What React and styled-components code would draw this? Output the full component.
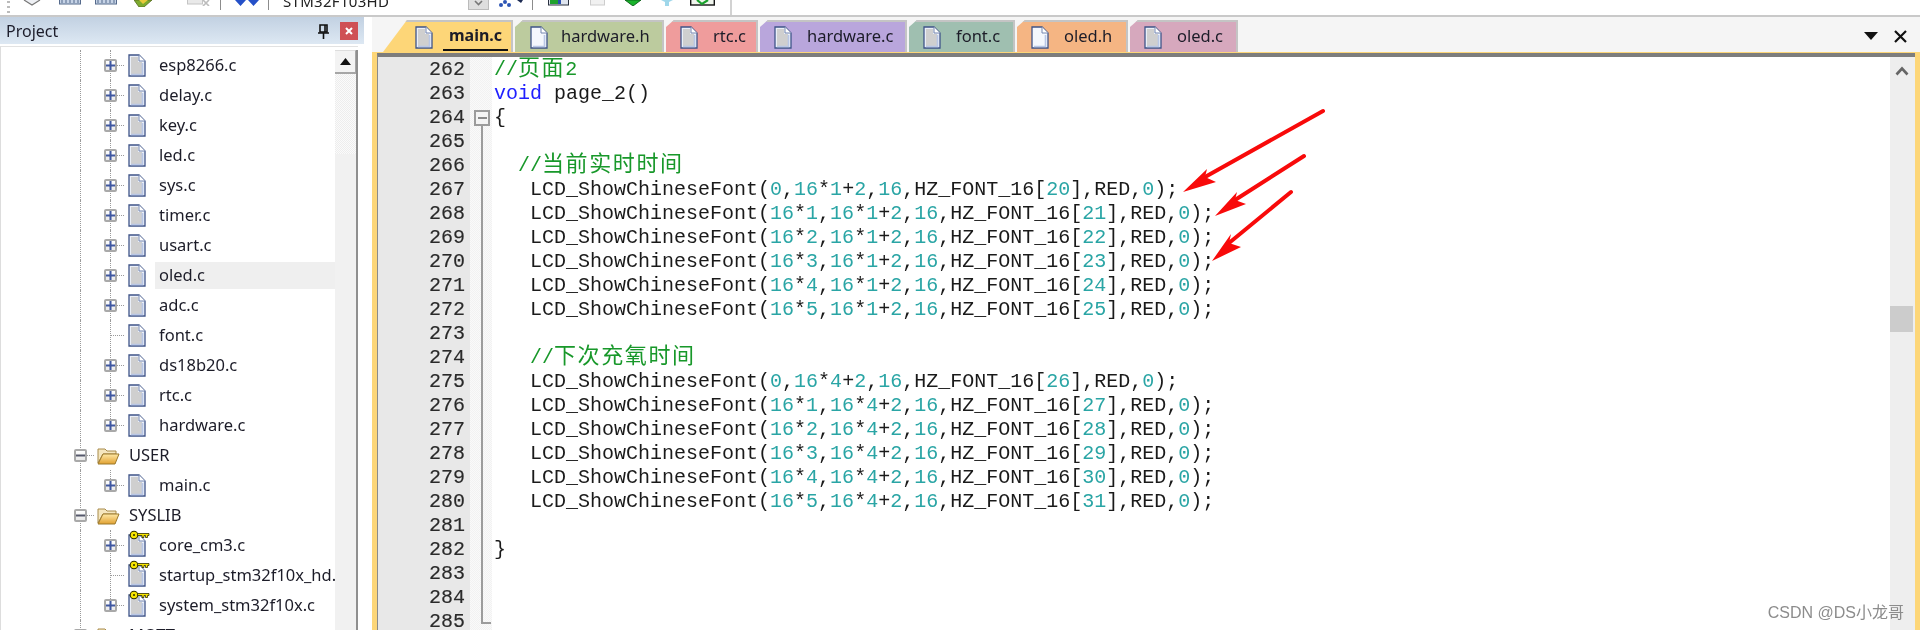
import React from "react";
import styled, { createGlobalStyle } from "styled-components";

const Global = createGlobalStyle`
  html, body { margin: 0; width: 1920px; height: 630px; overflow: hidden; background: #fff; }
  #root { width: 1920px; height: 630px; }
`;

const Page = styled.div`
  position: relative;
  width: 1920px;
  height: 630px;
  overflow: hidden;
  display: flex;
  flex-direction: column;
  background: #fff;
  font-family: "Noto Sans", sans-serif;
  filter: blur(0.5px);
`;

/* toolbar */
const Toolbar = styled.div`
  height: 15px;
  flex: none;
  border-bottom: 2px solid #c9c9c9;
  overflow: hidden;
  display: flex;
`;
const ToolGroup = styled.div`
  width: 730px;
  height: 15px;
  border-right: 2px solid #d2d2d2;
  display: flex;
  align-items: flex-start;
`;
const Tool = styled.svg`
  flex: none;
  display: block;
  margin-left: ${(p) => p.$left}px;
`;
const Sep = styled.span`
  flex: none;
  width: 1px;
  height: 10px;
  background: #8c8c8c;
  margin-left: ${(p) => p.$left}px;
`;
const Grip = styled.span`
  flex: none;
  width: 3px;
  height: 12px;
  margin: 1px 0 0 7px;
  background: repeating-linear-gradient(#bbb 0 2px, transparent 2px 5px);
`;
const Target = styled.span`
  flex: none;
  width: 185px;
  margin: -7px 0 0 14px;
  font-size: 15px;
  line-height: 16px;
  color: #222;
  letter-spacing: 0.3px;
`;
const Combo = styled.span`
  flex: none;
  width: 19px;
  height: 9px;
  background: #dedede;
  border: 1px solid #bbb;
  border-top: 0;
  display: flex;
  justify-content: center;
`;

/* main */
const Main = styled.div`
  flex: 1;
  min-height: 0;
  display: flex;
`;
const Sidebar = styled.aside`
  flex: none;
  width: 364px;
  margin-right: 8px;
  display: flex;
  flex-direction: column;
`;
const PanelHeader = styled.header`
  flex: none;
  height: 27px;
  padding: 1px 6px 0;
  box-sizing: border-box;
  display: flex;
  align-items: center;
  background: linear-gradient(#c2d1e2, #dde8f3);
  font-size: 16px;
  color: #1d1d2b;
`;
const PanelTitle = styled.span`
  flex: 1;
`;
const Pin = styled.svg`
  flex: none;
  margin-right: 11px;
`;
const CloseBtn = styled.span`
  flex: none;
  width: 18px;
  height: 18px;
  background: #cf5055;
  display: flex;
  align-items: center;
  justify-content: center;
`;
const TreeWrap = styled.div`
  flex: 1;
  min-height: 0;
  margin: 2px 6px 0 0;
  padding-top: 3px;
  border-top: 1px solid #e2e2e2;
  border-left: 1px solid #ddd;
  display: flex;
  overflow: hidden;
`;
const Tree = styled.ul`
  flex: 1;
  min-width: 0;
  margin: 0;
  padding: 0;
  list-style: none;
  overflow: hidden;
`;
const Row = styled.li`
  height: 30px;
  padding-left: 64px;
  display: flex;
  align-items: center;
  font-size: 16.5px;
  color: #1c1c28;
  white-space: nowrap;
`;
const Col = styled.span`
  position: relative;
  flex: none;
  width: 30px;
  height: 30px;
  display: flex;
  align-items: center;
  justify-content: center;
  &::before {
    content: "";
    display: ${(p) => (p.$v === "none" ? "none" : "block")};
    position: absolute;
    left: 15px;
    top: 0;
    height: ${(p) => (p.$v === "half" ? "15px" : "30px")};
    border-left: 1px dotted #9a9a9a;
  }
  &::after {
    content: "";
    display: ${(p) => (p.$h ? "block" : "none")};
    position: absolute;
    left: 15px;
    top: 15px;
    width: 14px;
    border-top: 1px dotted #9a9a9a;
  }
`;
const Box = styled.span`
  position: relative;
  z-index: 1;
  width: 13px;
  height: 13px;
  box-sizing: border-box;
  border: 2px solid #a9a9a9;
  border-radius: 2px;
  background: linear-gradient(#fff, #e8e8e8);
  display: flex;
  align-items: center;
  justify-content: center;
`;
const IconSlot = styled.span`
  flex: none;
  width: ${(p) => p.$w}px;
  display: flex;
  align-items: center;
  padding-left: ${(p) => p.$pad}px;
  box-sizing: border-box;
`;
const Label = styled.span`
  flex: none;
  height: 27px;
  line-height: 26px;
  margin-left: -4px;
  padding: 0 4px;
  width: ${(p) => (p.$wide ? "176px" : "auto")};
  background: ${(p) => (p.$selected ? "#efefef" : "transparent")};
`;
const TreeBar = styled.div`
  flex: none;
  width: 21px;
  border-right: 2px solid #8f8f8f;
  display: flex;
  flex-direction: column;
`;
const TreeBarButton = styled.span`
  flex: none;
  height: 24px;
  box-sizing: border-box;
  background: #f3f3f3;
  border-bottom: 2px solid #a6a6a6;
  border-right: 1px solid #a6a6a6;
  border-top: 1px solid #ddd;
  display: flex;
  align-items: center;
  justify-content: center;
`;
const TreeBarTrack = styled.span`
  flex: none;
  height: 80px;
  background: repeating-conic-gradient(#ededed 0 25%, #fbfbfb 0 50%) 0 0 / 2px 2px;
`;
const TreeBarThumb = styled.span`
  flex: 1;
  background: #f1f1f1;
`;

/* editor */
const Editor = styled.section`
  flex: 1;
  min-width: 0;
  display: flex;
  flex-direction: column;
`;
const TabStrip = styled.div`
  flex: none;
  height: 33px;
  padding: 2px 0 0 11px;
  background: #f5f5f5;
  display: flex;
  align-items: flex-end;
  gap: 2px;
`;
const Tab = styled.div`
  flex: none;
  box-sizing: border-box;
  width: ${(p) => p.$w}px;
  height: 32px;
  padding-left: ${(p) => p.$pad}px;
  display: flex;
  align-items: center;
  background: ${(p) => p.$bg};
  border-top: 2px solid #c4c4c4;
  border-right: 2px solid #c4c4c4;
  clip-path: polygon(${(p) => p.$slant}px 0, 100% 0, 100% 100%, 0 100%, 0 ${(p) => (p.$active ? "100%" : "7px")});
  font-size: 16.5px;
  color: #1c1c28;
`;
const TabText = styled.span`
  margin-left: ${(p) => p.$gap}px;
  font-weight: ${(p) => (p.$active ? 700 : 400)};
  font-size: ${(p) => (p.$active ? "16px" : "16.5px")};
  padding: 0 6px;
  height: 28px;
  line-height: 25px;
  box-sizing: border-box;
  border-bottom: ${(p) => (p.$active ? "2px solid #111" : "0")};
`;
const StripButtons = styled.div`
  margin-left: auto;
  height: 32px;
  padding-right: 13px;
  display: flex;
  align-items: center;
  gap: 16px;
`;
const Frame = styled.div`
  flex: 1;
  min-height: 0;
  border-top: 1px solid #fdd678;
  border-left: 5px solid #fdd678;
  border-right: 5px solid #fdd678;
  display: flex;
  flex-direction: column;
`;
const CodeView = styled.div`
  flex: 1;
  min-height: 0;
  border-top: 4px solid #7d7d7d;
  border-left: 1px solid #8b8b8b;
  display: flex;
  overflow: hidden;
  font-family: "Liberation Mono", "Noto Sans CJK SC", monospace;
  font-size: 20px;
  line-height: 24px;
`;
const Gutter = styled.div`
  flex: none;
  width: 92px;
  box-sizing: border-box;
  padding: 1px 5px 0 0;
  background: #e8e8e8;
  text-align: right;
  color: #2a2a2a;
  -webkit-text-stroke: 0.15px #2a2a2a;
`;
const FoldMargin = styled.div`
  flex: none;
  width: 22px;
  box-sizing: border-box;
  padding: 53px 0 0 4px;
  background: repeating-conic-gradient(#f2f2f2 0 25%, #fafafa 0 50%) 0 0 / 2px 2px;
`;
const FoldBox = styled.div`
  width: 16px;
  height: 16px;
  box-sizing: border-box;
  border: 2px solid #9c9c9c;
  background: #f4f4f4;
  display: flex;
  align-items: center;
  justify-content: center;
  &::before {
    content: "";
    width: 9px;
    height: 2px;
    background: #8a8a8a;
  }
`;
const FoldLine = styled.div`
  width: 8px;
  height: 496px;
  margin-left: 7px;
  border-left: 2px solid #9c9c9c;
  border-bottom: 2px solid #9c9c9c;
`;
const Code = styled.pre`
  flex: 1;
  margin: 0;
  padding: 1px 0 0 2px;
  font: inherit;
  color: #1a1a1a;
`;
const Line = styled.div`
  height: 24px;
  white-space: pre;
`;
const Comment = styled.span`
  color: #18982a;
`;
const Wide = styled.span`
  font-size: 22px;
  line-height: 20px;
  letter-spacing: 1.6px;
`;
const Keyword = styled.span`
  color: #2020ff;
`;
const Num = styled.span`
  color: #2aa5a5;
`;
const EditorBar = styled.div`
  flex: none;
  width: 25px;
  background: #eeeeee;
  display: flex;
  flex-direction: column;
`;
const EditorChevron = styled.svg`
  flex: none;
  margin: 9px 0 0 5px;
`;
const EditorThumb = styled.div`
  flex: none;
  width: 23px;
  height: 26px;
  margin-top: 230px;
  background: #cccccc;
`;
const ArrowLayer = styled.svg`
  position: absolute;
  left: 0;
  top: 0;
  pointer-events: none;
`;
const Watermark = styled.div`
  position: absolute;
  right: 16px;
  bottom: 7px;
  font-family: "Liberation Sans", "Noto Sans CJK SC", sans-serif;
  font-size: 16px;
  line-height: 20px;
  color: #8c8c8c;
`;

/* drawings */
const FileIcon = ({ plain, keyed }) => (
  <svg width="18" height="23" viewBox="0 0 18 23" style={{ overflow: "visible", display: "block" }}>
    <path d="M1 1H11L17 7V22H1Z" fill={plain ? "#f4f7fd" : "#eaeff8"} stroke="#3f5488" strokeWidth="1.3" />
    <path d="M11 1V7H17" fill="#fff" stroke="#7486b0" strokeWidth="1" />
    {!plain && <path d="M3 3H10V8H14V20H3Z" fill="#cfcfcf" />}
    <path d="M14.5 9V20.5H3" fill="none" stroke="#b9c7e6" strokeWidth="1.6" />
    {keyed && (
      <g transform="translate(1 4)">
        <circle cx="5" cy="-3" r="3.8" fill="#f7e400" stroke="#2c2c00" strokeWidth="1.1" />
        <circle cx="5" cy="-3" r="1" fill="#2c2c00" />
        <path d="M8.5 -4.5H20V-2.5H18.5V-0.5H16.5V-2.5H15V-0.5H13V-2.5H8.5Z" fill="#f7e400" stroke="#2c2c00" strokeWidth="0.8" />
      </g>
    )}
  </svg>
);

const FolderIcon = () => (
  <svg width="24" height="19" viewBox="0 0 24 19" style={{ display: "block" }}>
    <defs>
      <linearGradient id="folderFront" x1="0" y1="0" x2="0" y2="1">
        <stop offset="0" stopColor="#ffe9a8" />
        <stop offset="1" stopColor="#e0a030" />
      </linearGradient>
    </defs>
    <path d="M2 17V3H9L11 5H20V8H7L2 17Z" fill="#f5e6bf" stroke="#a88b4c" strokeWidth="1" />
    <path d="M2 18L7 8H23L19 18Z" fill="url(#folderFront)" stroke="#9c7a2c" strokeWidth="1" />
  </svg>
);

const Glyph = ({ minus }) => (
  <svg width="9" height="9" viewBox="0 0 9 9" style={{ display: "block" }}>
    <rect x="0" y="3.5" width="9" height="2" fill={minus ? "#55586b" : "#3f57a0"} />
    {!minus && <rect x="3.5" y="0" width="2" height="9" fill="#3f57a0" />}
  </svg>
);

const files = (names) => names.map((n) => ({ name: n, box: true }));
const treeRows = [
  ...files(["esp8266.c", "delay.c", "key.c", "led.c", "sys.c", "timer.c", "usart.c"]),
  { name: "oled.c", box: true, selected: true },
  { name: "adc.c", box: true },
  { name: "font.c", box: false },
  { name: "ds18b20.c", box: true },
  { name: "rtc.c", box: true },
  { name: "hardware.c", box: true, last: true },
  { name: "USER", folder: true },
  { name: "main.c", box: true, last: true },
  { name: "SYSLIB", folder: true },
  { name: "core_cm3.c", box: true, keyed: true },
  { name: "startup_stm32f10x_hd.", box: false, keyed: true },
  { name: "system_stm32f10x.c", box: true, keyed: true, last: true },
  { name: "MQTT", folder: true },
];

const TreeRow = ({ item }) =>
  item.folder ? (
    <Row>
      <Col $v="full" $h>
        <Box>
          <Glyph minus />
        </Box>
      </Col>
      <IconSlot $w={34} $pad={1}>
        <FolderIcon />
      </IconSlot>
      <Label>{item.name}</Label>
    </Row>
  ) : (
    <Row>
      <Col $v="full" />
      <Col $v={item.last ? "half" : "full"} $h>
        {item.box && (
          <Box>
            <Glyph />
          </Box>
        )}
      </Col>
      <IconSlot $w={34} $pad={3}>
        <FileIcon keyed={item.keyed} />
      </IconSlot>
      <Label $selected={item.selected} $wide={item.selected}>
        {item.name}
      </Label>
    </Row>
  );

const tabs = [
  { name: "main.c", w: 130, pad: 32, gap: 10, bg: "#fdd678", slant: 24, active: true },
  { name: "hardware.h", w: 149, pad: 15, gap: 7, bg: "#bccb9e", slant: 8, plain: true },
  { name: "rtc.c", w: 92, pad: 14, gap: 9, bg: "#ef9c9c", slant: 8 },
  { name: "hardware.c", w: 147, pad: 14, gap: 9, bg: "#b9a6dc", slant: 8 },
  { name: "font.c", w: 106, pad: 14, gap: 9, bg: "#9fbfb0", slant: 8 },
  { name: "oled.h", w: 111, pad: 14, gap: 9, bg: "#f5b583", slant: 8, plain: true },
  { name: "oled.c", w: 108, pad: 14, gap: 9, bg: "#d6a8bd", slant: 8 },
];

const call = (x, y, i) => `LCD_ShowChineseFont(${x},16*${y}+2,16,HZ_FONT_16[${i}],RED,0);`;
const xs = ["0", "16*1", "16*2", "16*3", "16*4", "16*5"];
const codeLines = [
  "//页面2",
  "void page_2()",
  "{",
  "",
  "  //当前实时时间",
  ...xs.map((x, k) => "   " + call(x, 1, 20 + k)),
  "",
  "   //下次充氧时间",
  ...xs.map((x, k) => "   " + call(x, 4, 26 + k)),
  "",
  "}",
  "",
  "",
  "",
];

const renderComment = (text) =>
  text.split(/([\u4e00-\u9fff]+)/).map((part, i) => (i % 2 ? <Wide key={i}>{part}</Wide> : part));

const renderLine = (text) => {
  if (text.trim().startsWith("//")) return <Comment>{renderComment(text)}</Comment>;
  if (text.startsWith("void")) {
    return (
      <>
        <Keyword>void</Keyword>
        {text.slice(4)}
      </>
    );
  }
  return text.split(/((?<![A-Za-z_\d])\d+)/).map((part, i) => (i % 2 ? <Num key={i}>{part}</Num> : part));
};

const Arrow = ({ tail, tip, w1, notch, w2 }) => (
  <g>
    <line x1={tail[0]} y1={tail[1]} x2={notch[0]} y2={notch[1]} stroke="#f80a0a" strokeWidth="4" strokeLinecap="round" />
    <polygon points={[tip, w1, notch, w2].map((p) => p.join(",")).join(" ")} fill="#f80a0a" />
  </g>
);

export default function App() {
  return (
    <>
      <Global />
      <Page>
        <Toolbar>
          <ToolGroup>
            <Grip />
            <Tool $left={13} width="18" height="6" viewBox="0 0 18 6">
              <path d="M1 0L9 5L17 0" fill="#eef0f4" stroke="#777" strokeWidth="1.2" />
            </Tool>
            <Tool $left={18} width="22" height="6" viewBox="0 0 22 6">
              <rect x="0.5" y="-2" width="21" height="6" fill="#c6d3e6" stroke="#556a8c" />
              <path d="M3 0V3M7 0V3M11 0V3M15 0V3M19 0V3" stroke="#556a8c" />
            </Tool>
            <Tool $left={14} width="22" height="6" viewBox="0 0 22 6">
              <rect x="0.5" y="-2" width="21" height="6" fill="#c6d3e6" stroke="#556a8c" />
              <path d="M3 0V3M7 0V3M11 0V3M15 0V3M19 0V3" stroke="#556a8c" />
            </Tool>
            <Tool $left={17} width="18" height="7" viewBox="0 0 18 7">
              <path d="M0 0H18L10 7H5Z" fill="#7dab2e" stroke="#556b20" strokeWidth="0.8" />
              <path d="M5 0H14L9 4Z" fill="#e8c93a" />
            </Tool>
            <Tool $left={35} width="23" height="6" viewBox="0 0 23 6">
              <rect x="0.5" y="-2" width="15" height="6" fill="#e9e9e9" stroke="#c4c4c4" />
              <path d="M16 0L22 6M22 0L16 6" stroke="#bcbcbc" strokeWidth="1.6" />
            </Tool>
            <Sep $left={10} />
            <Tool $left={14} width="24" height="6" viewBox="0 0 24 6">
              <path d="M0 0H11L5.5 6ZM13 0H24L18.5 6Z" fill="#2550c8" />
            </Tool>
            <Sep $left={9} />
            <Target>STM32F103HD</Target>
            <Combo>
              <svg width="9" height="6" viewBox="0 0 9 6">
                <path d="M1 1L4.5 4.5L8 1" fill="none" stroke="#777" strokeWidth="1.6" />
              </svg>
            </Combo>
            <Tool $left={9} width="25" height="7" viewBox="0 0 25 7">
              <circle cx="3" cy="5" r="2" fill="#2d55b5" />
              <circle cx="7" cy="2" r="2" fill="#2d55b5" />
              <circle cx="11" cy="5" r="2" fill="#2d55b5" />
              <path d="M19 0L23 3L25 0Z" fill="#1d2b52" />
            </Tool>
            <Sep $left={9} />
            <Tool $left={15} width="21" height="6" viewBox="0 0 21 6">
              <rect x="0.5" y="-2" width="20" height="7" fill="#dfe5ef" stroke="#29303f" />
              <rect x="2" y="-2" width="8" height="6" fill="#1fa12d" />
              <rect x="10" y="-2" width="3" height="6" fill="#2a4fb0" />
            </Tool>
            <Tool $left={21} width="15" height="6" viewBox="0 0 15 6">
              <rect x="0.5" y="-2" width="14" height="7" fill="#f1f1f1" stroke="#cdcdcd" />
            </Tool>
            <Tool $left={18} width="20" height="6" viewBox="0 0 20 6">
              <path d="M2 0H18L10 6Z" fill="#19b32b" stroke="#0a5c16" strokeWidth="0.9" />
            </Tool>
            <Tool $left={18} width="12" height="6" viewBox="0 0 12 6">
              <path d="M0 0H12L8 2V6H4V2Z" fill="#9fd7ea" />
            </Tool>
            <Tool $left={17} width="25" height="6" viewBox="0 0 25 6">
              <rect x="0.7" y="-2" width="23.6" height="7" fill="#f1f6ee" stroke="#151515" strokeWidth="1.4" />
              <path d="M7 0L12 4L18 0" fill="none" stroke="#19a02b" strokeWidth="2.2" />
            </Tool>
          </ToolGroup>
        </Toolbar>
        <Main>
          <Sidebar>
            <PanelHeader>
              <PanelTitle>Project</PanelTitle>
              <Pin width="11" height="15" viewBox="0 0 11 15">
                <path d="M2 1H9V8H2Z" fill="none" stroke="#111" strokeWidth="1.6" />
                <path d="M7 1V8M0 9H11M5.5 9V15" stroke="#111" strokeWidth="1.6" />
              </Pin>
              <CloseBtn>
                <svg width="8" height="8" viewBox="0 0 8 8">
                  <path d="M1 1L7 7M7 1L1 7" stroke="#fff" strokeWidth="2" />
                </svg>
              </CloseBtn>
            </PanelHeader>
            <TreeWrap>
              <Tree>
                {treeRows.map((item) => (
                  <TreeRow key={item.name} item={item} />
                ))}
              </Tree>
              <TreeBar>
                <TreeBarButton>
                  <svg width="11" height="7" viewBox="0 0 11 7">
                    <path d="M5.5 0L11 7H0Z" fill="#111" />
                  </svg>
                </TreeBarButton>
                <TreeBarTrack />
                <TreeBarThumb />
              </TreeBar>
            </TreeWrap>
          </Sidebar>
          <Editor>
            <TabStrip>
              {tabs.map((t) => (
                <Tab key={t.name} $w={t.w} $pad={t.pad} $bg={t.bg} $slant={t.slant} $active={t.active}>
                  <FileIcon plain={t.plain} />
                  <TabText $gap={t.gap} $active={t.active}>
                    {t.name}
                  </TabText>
                </Tab>
              ))}
              <StripButtons>
                <svg width="14" height="8" viewBox="0 0 14 8">
                  <path d="M0 0H14L7 8Z" fill="#111" />
                </svg>
                <svg width="13" height="13" viewBox="0 0 13 13">
                  <path d="M1 1L12 12M12 1L1 12" stroke="#111" strokeWidth="2.2" />
                </svg>
              </StripButtons>
            </TabStrip>
            <Frame>
              <CodeView>
                <Gutter>
                  {codeLines.map((_, i) => (
                    <Line key={i}>{262 + i}</Line>
                  ))}
                </Gutter>
                <FoldMargin>
                  <FoldBox />
                  <FoldLine />
                </FoldMargin>
                <Code>
                  {codeLines.map((text, i) => (
                    <Line key={i}>{renderLine(text)}</Line>
                  ))}
                </Code>
                <EditorBar>
                  <EditorChevron width="14" height="10" viewBox="0 0 14 10">
                    <path d="M1.5 8.5L7 2.5L12.5 8.5" fill="none" stroke="#666" strokeWidth="2.6" />
                  </EditorChevron>
                  <EditorThumb />
                </EditorBar>
              </CodeView>
            </Frame>
          </Editor>
        </Main>
        <ArrowLayer width="1920" height="630" viewBox="0 0 1920 630">
          <Arrow tail={[1323, 111]} tip={[1183, 192]} w1={[1207, 169]} notch={[1205, 177]} w2={[1216, 182]} />
          <Arrow tail={[1304, 156]} tip={[1215, 216]} w1={[1237, 192]} notch={[1235, 200]} w2={[1246, 204]} />
          <Arrow tail={[1291, 192]} tip={[1212, 261]} w1={[1231, 234]} notch={[1229, 243]} w2={[1241, 247]} />
        </ArrowLayer>
        <Watermark>CSDN @DS小龙哥</Watermark>
      </Page>
    </>
  );
}
